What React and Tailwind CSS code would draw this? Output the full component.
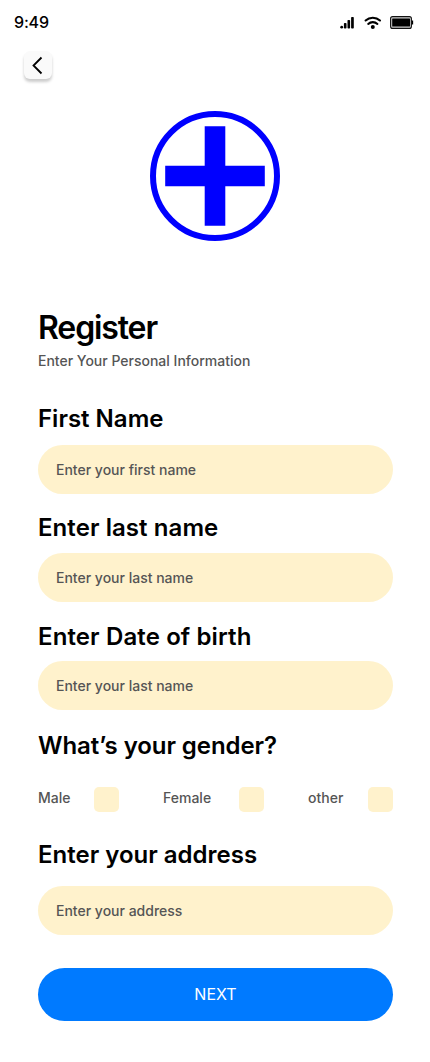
const inputCls = "block w-full rounded-full bg-[#fff2cc] px-[18px] text-[14px] font-medium text-[#555] placeholder:text-[#555] placeholder:opacity-100 outline-none h-[49px]";
const labelCls = "block text-[24px] leading-[29px] font-semibold text-black";

function Field({ label, placeholder, className, gap, tracking = "" }) {
  return (
    <label className={`block ${className}`}>
      <span className={`${labelCls} ${tracking}`}>{label}</span>
      <input className={`${inputCls} ${gap}`} placeholder={placeholder} />
    </label>
  );
}

function Option({ label, width }) {
  return (
    <label className={`flex items-center justify-between ${width}`}>
      <span className="-mt-[4px] text-[14px] leading-[17px] font-medium text-[#555]">{label}</span>
      <span className="size-[25px] rounded-[5px] bg-[#fff2cc]" />
    </label>
  );
}

export default function App() {
  return (
    <main className="flex h-[1062px] w-[430px] flex-col bg-white font-['Inter',sans-serif]">
      <header className="flex h-[44px] items-center justify-between pr-[16px] pl-[14px]">
        <span className="text-[16px] leading-[20px] font-medium tracking-[-0.01em] text-black">9:49</span>
        <div className="flex items-center pt-px">
          <svg width="14" height="13" viewBox="0 0 14 13" fill="#000">
            <rect x="0.3" y="9.8" width="2.8" height="2.8" rx="1.4" />
            <rect x="3.9" y="7" width="2.6" height="5.6" rx=".8" />
            <rect x="7.5" y="4" width="2.6" height="8.6" rx=".8" />
            <rect x="11.1" y="1" width="2.7" height="11.6" rx=".8" />
          </svg>
          <svg className="ml-[10px]" width="18" height="14" viewBox="0 0 18 14" fill="none" stroke="#000" strokeWidth="2.1" strokeLinecap="round">
            <path d="M1.6 4.5a10.6 10.6 0 0 1 14.4 0M4.2 7.9a6.8 6.8 0 0 1 9.2 0" />
            <circle cx="8.8" cy="11" r="2" fill="#000" stroke="none" />
          </svg>
          <svg className="ml-[8px]" width="24" height="13" viewBox="0 0 24 13">
            <rect x=".6" y=".6" width="20.8" height="11.8" rx="2" fill="#ccc" stroke="#111" strokeWidth="1.1" />
            <rect x="2.2" y="2.4" width="17.8" height="8.2" rx=".5" />
            <path d="M22.5 4.5v4" stroke="#000" strokeWidth="1.3" />
          </svg>
        </div>
      </header>

      <button aria-label="Back" className="mt-[7px] ml-[24px] flex size-[28px] items-center justify-center rounded-[6px] bg-[#fafafa] shadow-[0_3px_3px_rgba(0,0,0,0.2)]">
        <svg width="28" height="28" viewBox="0 0 28 28" fill="none" stroke="#000" strokeWidth="1.8">
          <path d="M17.5 6.5 9.5 14.5l8 8" />
        </svg>
      </button>

      <svg className="mt-[31px] ml-[149px]" width="132" height="132" viewBox="0 0 132 132">
        <circle cx="66" cy="66" r="62" fill="none" stroke="#00f" strokeWidth="6" />
        <path d="M55.7 16.2h20.6v39.5h39.5v20.6H76.3v39.5H55.7V76.3H16.2V55.7h39.5z" fill="#00f" />
      </svg>

      <form className="mr-[37px] ml-[38px] flex flex-col">
        <h1 className="mt-[66px] text-[32px] leading-[39px] font-semibold tracking-[-0.035em] text-black">Register</h1>
        <p className="mt-[5px] text-[14px] leading-[17px] font-medium text-[#555]">Enter Your Personal Information</p>
        <Field label="First Name" placeholder="Enter your first name" className="mt-[35px]" gap="mt-[12px]" />
        <Field label="Enter last name" placeholder="Enter your last name" className="mt-[19px]" gap="mt-[11px]" tracking="tracking-[0.003em]" />
        <Field label="Enter Date of birth" placeholder="Enter your last name" className="mt-[20px]" gap="mt-[10px]" tracking="tracking-[0.005em]" />
        <h2 className={`${labelCls} mt-[21px] tracking-[-0.003em]`}>What’s your gender?</h2>
        <div className="mt-[27px] flex justify-between">
          <Option label="Male" width="w-[81px]" />
          <Option label="Female" width="w-[101px]" />
          <Option label="other" width="w-[85px]" />
        </div>
        <Field label="Enter your address" placeholder="Enter your address" className="mt-[28px]" gap="mt-[17px]" />
        <button type="button" className="mt-[33px] h-[53px] rounded-full bg-[#007aff] pb-[2px] text-[16px] text-white">NEXT</button>
      </form>
    </main>
  );
}
